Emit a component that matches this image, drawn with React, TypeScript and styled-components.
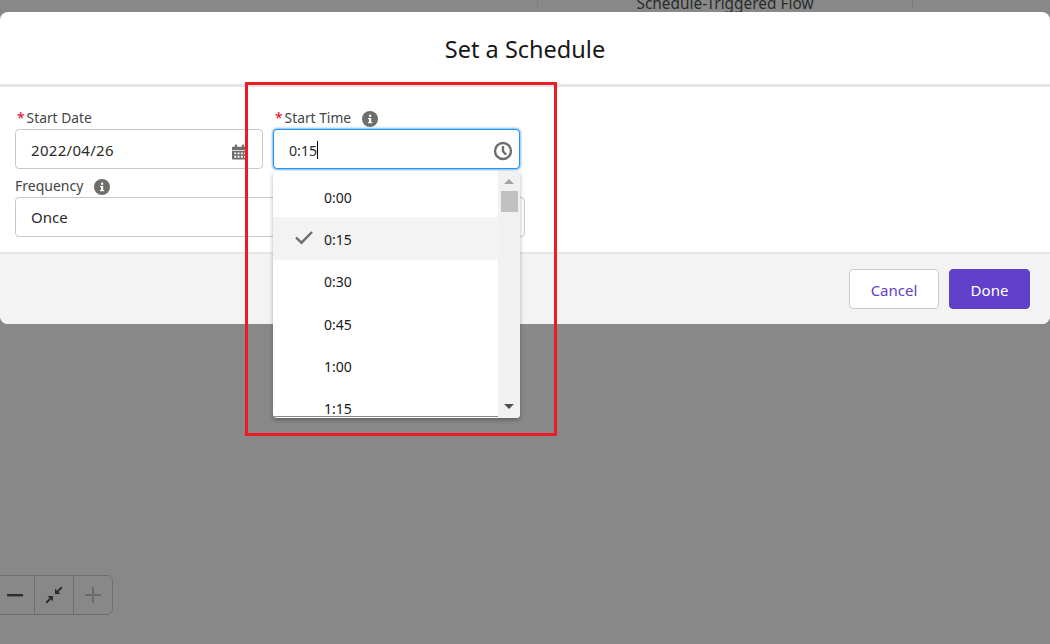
import React from 'react';
import styled, {createGlobalStyle} from 'styled-components';

const Global = createGlobalStyle`
html,body{margin:0;padding:0;}
body{font-family:"Noto Sans","Open Sans",sans-serif;color:#181818;}
*{box-sizing:border-box;}
`;
const Page = styled.div`
position:relative;
width:1050px;
height:644px;
overflow:hidden;
background:#888888;
display:flex;
flex-direction:column;
`;
const BehindStrip = styled.div`
height:12px;
padding-left:537px;
overflow:hidden;
flex:none;
`;
const BehindCard = styled.div`
width:376px;
height:12px;
border-left:1px solid #7c7c7c;
border-right:1px solid #7c7c7c;
font-size:15.4px;
line-height:15px;
color:#2b2b2b;
text-align:center;
margin-top:-4px;
`;
const Modal = styled.div`
background:#fff;
border-radius:8px;
flex:none;
`;
const Header = styled.h2`
margin:0;
height:75px;
border-bottom:3px solid #e5e5e5;
font-size:23.5px;
font-weight:400;
line-height:75px;
text-align:center;
color:#181818;
`;
const Body = styled.div`
height:165px;
padding:21px 15px 0;
`;
const Row = styled.div`
display:flex;
gap:10px;
`;
const Field = styled.div<{$w:number}>`
width:${p=>p.$w}px;
position:relative;
`;
const Label = styled.div`
display:flex;
align-items:center;
height:19px;
font-size:13.8px;
color:#444;
margin-bottom:2px;
padding-left:2px;
`;
const PlainLabel = styled(Label)`
padding-left:0;
margin-top:7px;
font-size:14px;
`;
const Star = styled.span`
color:#ea001e;
margin-right:2px;
`;
const InfoWrap = styled.span`
display:inline-flex;
margin:2px 0 0 11px;
`;
const Input = styled.div<{$focus?:boolean}>`
height:40px;
border:1px solid ${p=>p.$focus?'#1b96ff':'#c9c9c9'};
box-shadow:${p=>p.$focus?'0 0 3px #0176d3':'none'};
border-radius:4px;
background:#fff;
display:flex;
align-items:center;
justify-content:space-between;
padding:0 6px 0 15px;
font-size:15px;
color:#2b2b2b;
`;
const DateText = styled.span`
letter-spacing:.3px;
margin-top:2px;
`;
const Value = styled.span`
display:flex;
align-items:center;
font-size:14.2px;
margin-top:2px;
`;
const Caret = styled.span`
width:1px;
height:18px;
background:#000;
`;
const CalendarSlot = styled.span`
display:flex;
margin:5px 9px 0 0;
`;
const ClockSlot = styled.span`
display:flex;
margin-top:3px;
`;
const Footer = styled.div`
height:72px;
background:#f3f3f3;
border-top:2px solid #e5e5e5;
border-radius:0 0 8px 8px;
display:flex;
justify-content:flex-end;
align-items:flex-start;
gap:10px;
padding:15px 20px 0 0;
`;
const Button = styled.button<{$primary?:boolean}>`
height:40px;
width:${p=>p.$primary?81:90}px;
border-radius:4px;
font-family:inherit;
font-size:15px;
border:1px solid ${p=>p.$primary?'#6040c8':'#c9c9c9'};
background:${p=>p.$primary?'#6040c8':'#fff'};
color:${p=>p.$primary?'#fff':'#6040c8'};
padding:1px 0 0;
`;
const Dropdown = styled.div`
position:absolute;
left:273px;
top:171px;
width:247px;
height:247px;
background:#fff;
border-radius:4px;
box-shadow:0 2px 4px rgba(0,0,0,.3);
display:flex;
overflow:hidden;
`;
const List = styled.div`
flex:1;
height:246px;
padding-top:4px;
overflow:hidden;
border-bottom:1px solid #8a8a8a;
`;
const Option = styled.div<{$selected?:boolean}>`
height:42.3px;
flex:none;
display:flex;
align-items:center;
padding:2px 0 0 51px;
position:relative;
font-size:14px;
color:#181818;
background:${p=>p.$selected?'#f3f3f3':'transparent'};
`;
const CheckWrap = styled.span`
position:absolute;
left:21px;
top:13px;
display:flex;
`;
const ScrollTrack = styled.div`
width:22px;
background:#f1f1f1;
position:relative;
display:flex;
flex-direction:column;
align-items:center;
padding-top:8px;
`;
const ScrollThumb = styled.div`
width:17px;
height:21px;
background:#c1c1c1;
margin-top:7px;
`;
const ArrowUp = styled.div`
width:0;
height:0;
border-left:5px solid transparent;
border-right:5px solid transparent;
border-bottom:5px solid #a3a3a3;
`;
const ArrowDown = styled.div`
width:0;
height:0;
border-left:5px solid transparent;
border-right:5px solid transparent;
border-top:5px solid #505050;
margin-top:auto;
margin-bottom:9px;
`;
const Highlight = styled.div`
position:absolute;
left:245px;
top:82px;
width:312px;
height:354px;
border:3px solid #ed1c24;
pointer-events:none;
`;
const ZoomBar = styled.div`
position:absolute;
left:-5px;
top:575px;
height:40px;
display:flex;
border:1px solid #6f6f6f;
border-radius:0 6px 6px 0;
`;
const ZoomBtn = styled.div<{$last?:boolean}>`
width:${p=>p.$last?38:39}px;
height:100%;
display:flex;
align-items:center;
justify-content:center;
border-right:${p=>p.$last?'none':'1px solid #6f6f6f'};
`;

const InfoIcon = () => (
    <svg width="16" height="16" viewBox="0 0 16 16">
        <circle cx="8" cy="8" r="8" fill="#706e6b"/>
        <rect x="7" y="7" width="2.2" height="5" fill="#fff"/>
        <rect x="6" y="7" width="2" height="1.2" fill="#fff"/>
        <rect x="6" y="11" width="4.2" height="1.2" fill="#fff"/>
        <circle cx="8.1" cy="4.8" r="1.2" fill="#fff"/>
    </svg>
);
const CalendarIcon = () => (
    <svg width="15" height="18" viewBox="0 0 16 18">
        <path d="M1 3.5h14a1 1 0 0 1 1 1V7H0V4.5a1 1 0 0 1 1-1z" fill="#706e6b"/>
        <rect x="3" y="1" width="2.4" height="4" rx="1" fill="#706e6b"/>
        <rect x="10.6" y="1" width="2.4" height="4" rx="1" fill="#706e6b"/>
        <path fillRule="evenodd" fill="#706e6b" d="M0 8h16v8a1 1 0 0 1-1 1H1a1 1 0 0 1-1-1zM2.5 9.5v2h2v-2zM6 9.5v2h2v-2zM9.5 9.5v2h2v-2zM13 9.5v2h1.5v-2zM2.5 13v2h2v-2zM6 13v2h2v-2zM9.5 13v2h2v-2zM13 13v2h1.5v-2z"/>
    </svg>
);
const ClockIcon = () => (
    <svg width="20" height="20" viewBox="0 0 20 20">
        <circle cx="10" cy="10" r="8" fill="none" stroke="#706e6b" strokeWidth="2.4"/>
        <path d="M10 5v5.3l3.2 3.4" fill="none" stroke="#706e6b" strokeWidth="2.4"/>
    </svg>
);
const CheckIcon = () => (
    <svg width="20" height="15" viewBox="0 0 20 15">
        <path d="M2 7.5l5.5 5.2L18 2" fill="none" stroke="#706e6b" strokeWidth="2.4"/>
    </svg>
);

const times = ['0:00','0:15','0:30','0:45','1:00','1:15'];

export default function App() {
    return (
        <Page>
            <Global/>
            <BehindStrip>
                <BehindCard>Schedule-Triggered Flow</BehindCard>
            </BehindStrip>
            <Modal>
                <Header>Set a Schedule</Header>
                <Body>
                    <Row>
                        <Field $w={248}>
                            <Label><Star>*</Star>Start Date</Label>
                            <Input>
                                <DateText>2022/04/26</DateText>
                                <CalendarSlot><CalendarIcon/></CalendarSlot>
                            </Input>
                        </Field>
                        <Field $w={247}>
                            <Label>
                                <Star>*</Star>Start Time
                                <InfoWrap><InfoIcon/></InfoWrap>
                            </Label>
                            <Input $focus>
                                <Value>0:15<Caret/></Value>
                                <ClockSlot><ClockIcon/></ClockSlot>
                            </Input>
                        </Field>
                    </Row>
                    <Field $w={510}>
                        <PlainLabel>Frequency<InfoWrap><InfoIcon/></InfoWrap></PlainLabel>
                        <Input><span>Once</span></Input>
                    </Field>
                </Body>
                <Footer>
                    <Button>Cancel</Button>
                    <Button $primary>Done</Button>
                </Footer>
            </Modal>
            <Dropdown>
                <List>
                    {times.map(t => (
                        <Option key={t} $selected={t === '0:15'}>
                            {t === '0:15' && <CheckWrap><CheckIcon/></CheckWrap>}
                            {t}
                        </Option>
                    ))}
                </List>
                <ScrollTrack>
                    <ArrowUp/>
                    <ScrollThumb/>
                    <ArrowDown/>
                </ScrollTrack>
            </Dropdown>
            <Highlight/>
            <ZoomBar>
                <ZoomBtn>
                    <svg width="18" height="18" viewBox="0 0 18 18"><rect x="1" y="8" width="16" height="2.4" fill="#2f2f2f"/></svg>
                </ZoomBtn>
                <ZoomBtn>
                    <svg width="18" height="18" viewBox="0 0 18 18" fill="#2f2f2f">
                        <path d="M10.5 2v5.5H16zM16.6 0l1.4 1.4-4 4-1.4-1.4z" transform="translate(-0.5,0.5)"/>
                        <path d="M7.5 16v-5.5H2zM1.4 18L0 16.6l4-4 1.4 1.4z" transform="translate(0.5,-0.5)"/>
                    </svg>
                </ZoomBtn>
                <ZoomBtn $last>
                    <svg width="18" height="18" viewBox="0 0 18 18" fill="#6b6b6b"><rect x="1" y="8" width="16" height="2"/><rect x="8" y="1" width="2" height="16"/></svg>
                </ZoomBtn>
            </ZoomBar>
        </Page>
    );
}
